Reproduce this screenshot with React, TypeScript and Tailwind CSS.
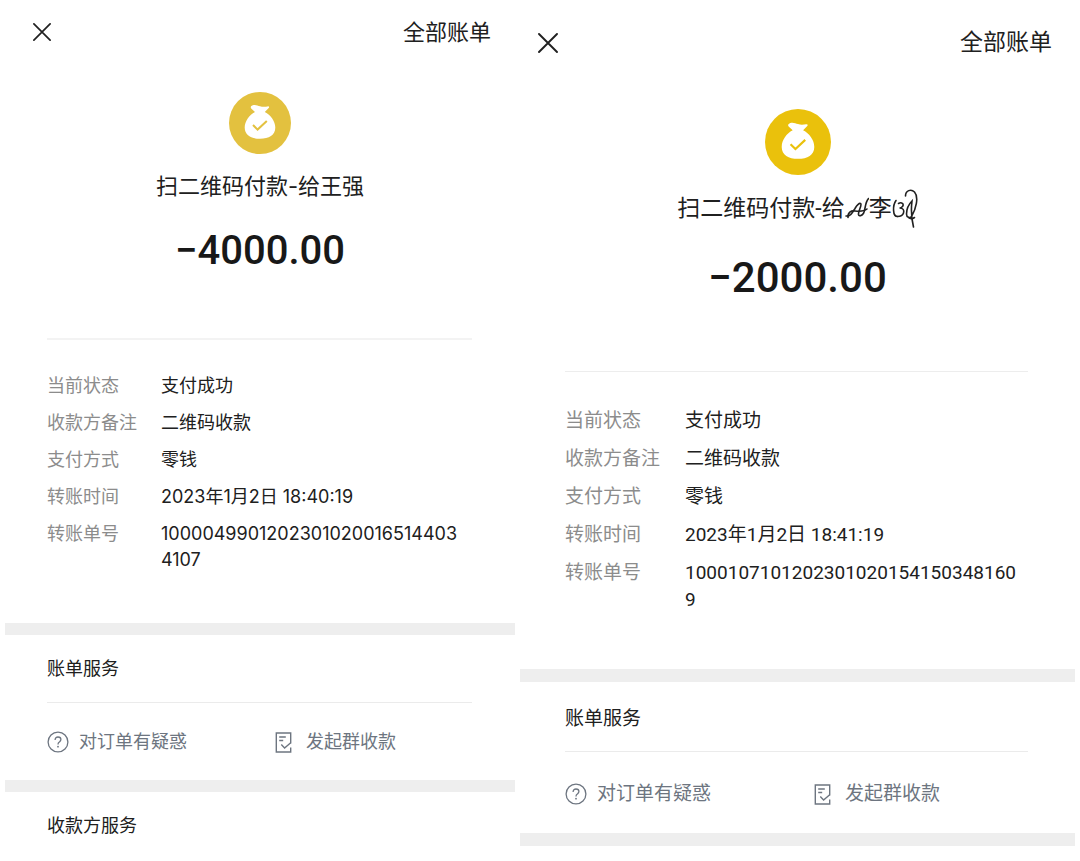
import clsx from "clsx";

interface Receipt {
  id: string;
  payee: string;
  decorated?: boolean;
  amount: string;
  rows: { label: string; value: string }[];
  services: string[];
}

/** 每张账单的尺寸方案：compact 较小，regular 较大 */
const themes = {
  compact: {
    font: "font-[Inter,'Noto_Sans_CJK_SC',sans-serif]",
    header: "h-16 pl-7 pr-6 text-[22px]",
    close: "size-[18px]",
    hero: "pt-7",
    badge: "size-[62px] text-[#e3c13f]",
    title: "mt-4 text-[22px]",
    amount: "mt-6 text-[40px] leading-[50px]",
    gutter: "ml-[42px] mr-[43px]",
    heroLine: "mt-[62px] border-t-2 border-[#f3f3f3]",
    rows: "mt-[33px] mb-[50px] grid-cols-[114px_1fr] text-[18px] leading-[26px]",
    number: "pr-1",
    band: "h-3",
    sectionTitle: "pt-5 text-[18px]",
    sectionLine: "mt-[19px]",
    actions: "pt-[25px] pb-6 text-[18px] grid-cols-[228px_1fr]",
  },
  regular: {
    font: "font-[Roboto,'Noto_Sans_CJK_SC',sans-serif]",
    header: "h-[86px] pl-[18px] pr-[23px] text-[23px]",
    close: "size-5",
    hero: "pt-[23px]",
    badge: "size-[66px] text-[#eac10c]",
    title: "mt-[18px] text-[23px]",
    amount: "mt-[27px] text-[42px] leading-[52px]",
    gutter: "ml-[45px] mr-[47px]",
    heroLine: "mt-[67px] border-t border-[#ededed]",
    rows: "mt-[35px] mb-14 grid-cols-[120px_1fr] text-[19px] leading-[27px]",
    number: "pr-2",
    band: "h-[13px]",
    sectionTitle: "pt-[23px] text-[19px]",
    sectionLine: "mt-[18px]",
    actions: "pt-7 pb-[25px] text-[19px] grid-cols-[249px_1fr]",
  },
};

type Theme = (typeof themes)["compact"];

const first: Receipt = {
  id: "first",
  payee: "王强",
  amount: "4000.00",
  rows: [
    { label: "当前状态", value: "支付成功" },
    { label: "收款方备注", value: "二维码收款" },
    { label: "支付方式", value: "零钱" },
    { label: "转账时间", value: "2023年1月2日 18:40:19" },
    { label: "转账单号", value: "10000499012023010200165144034107" },
  ],
  services: ["收款方服务"],
};

const second: Receipt = {
  id: "second",
  payee: "李",
  decorated: true,
  amount: "2000.00",
  rows: [
    { label: "当前状态", value: "支付成功" },
    { label: "收款方备注", value: "二维码收款" },
    { label: "支付方式", value: "零钱" },
    { label: "转账时间", value: "2023年1月2日 18:41:19" },
    { label: "转账单号", value: "10001071012023010201541503481609" },
  ],
  services: [],
};

function CloseIcon({ className }: { className: string }) {
  return (
    <svg viewBox="0 0 20 20" className={className} fill="none" stroke="currentColor" strokeWidth="1.9" strokeLinecap="round">
      <path d="M1 1l18 18M19 1L1 19" />
    </svg>
  );
}

function MoneyBag({ className }: { className: string }) {
  return (
    <svg viewBox="0 0 62 62" className={className} aria-hidden="true">
      <circle cx="31" cy="31" r="31" fill="currentColor" />
      <path
        fill="#fff"
        d="M23.800 13.200c2.500-.9 4.900.3 7.200 1 2.500.8 5 .6 7.600.2 1.500-.2 2 .5 1.100 1.600l-3.900 4c5.800 3 10.500 9.200 10.500 15.600 0 7.600-6.400 11.200-15.300 11.200s-15.300-3.600-15.300-11.200c0-6.400 4.600-12.600 10.300-15.600l-3.800-3.600c-1-1.100-.4-2.600 1.600-3.200z"
      />
      <path d="M24 33l4.600 4.600 9.200-8.600" fill="none" stroke="currentColor" strokeWidth="2" />
    </svg>
  );
}

function HelpIcon() {
  return (
    <svg viewBox="0 0 22 22" className="size-[22px]" fill="none" stroke="currentColor" strokeWidth="1.300">
      <circle cx="11" cy="11" r="9.900" />
      <path d="M8.100 8.900c0-1.800 1.200-2.900 2.900-2.900s2.900 1.100 2.900 2.600c0 1.200-.8 1.800-1.600 2.500-.8.600-1.300 1.100-1.300 2.300" />
      <circle cx="11" cy="15.700" r=".9" fill="currentColor" stroke="none" />
    </svg>
  );
}

function BillIcon() {
  return (
    <svg viewBox="0 0 17 21" className="h-[21px] w-[17px]" fill="none" stroke="currentColor" strokeWidth="1.400">
      <path d="M15.700 11.500V1H1.300v19h14.400v-4.500" />
      <path d="M4.200 5h6.600M4.200 8.500h4M6.300 12.600l3.300 3.400 6.100-5.300" />
    </svg>
  );
}

/** 昵称左侧的花饰 */
function LeftFlourish() {
  return (
    <svg viewBox="0 0 24 24" className="h-6 w-6" fill="none" stroke="currentColor" strokeWidth="1.600" strokeLinecap="round">
      <path d="M1 19c4.500.5 6.500-3.500 9-7.500C12 8 14.500 5.500 15.800 6.800c1.200 1.500-2.800 7.700-2.300 10.700.4 2 3.500 1.500 5.200-1.500C20.500 12 20 5 23.500 1.500" />
      <path d="M3 20.500C2.500 15.500 6 13.500 10 14s9 .5 12-2" />
    </svg>
  );
}

/** 昵称右侧的花饰 */
function RightFlourish() {
  return (
    <svg viewBox="0 0 26 40" className="h-10 w-[26px]" fill="none" stroke="currentColor" strokeWidth="1.600" strokeLinecap="round">
      <path d="M4 11.500C.5 16.500.5 27.500 5.500 27.500" />
      <path d="M6.500 14.500c3-2 6 .5 4 3-.8 1-2 1.500-3 1.500 3.500 0 5 2 4 5-.8 2.500-3 3.500-6 3.500" />
      <path d="M13.500 7C13.500 1.500 19-.5 22.500 3c4.500 5 1.500 17-3 24.500-1.500 2-5 1-5-2.500 0-5 3-10.500 5.500-13-1 8-1 16 1.500 26" />
      <path d="M17 28.800c1.500.9 4 .8 5.500-.3" />
    </svg>
  );
}

function SectionTitle({ theme, children }: { theme: Theme; children: string }) {
  return <h2 className={clsx("leading-7", theme.gutter, theme.sectionTitle)}>{children}</h2>;
}

function ReceiptPanel({ receipt, theme }: { receipt: Receipt; theme: Theme }) {
  return (
    <article className={clsx("min-w-0 text-[#202020]", theme.font)}>
      <header className={clsx("flex items-center justify-between", theme.header)}>
        <button type="button" aria-label="关闭">
          <CloseIcon className={theme.close} />
        </button>
        <button type="button">全部账单</button>
      </header>

      <div className={clsx("flex flex-col items-center", theme.hero)}>
        <MoneyBag className={theme.badge} />
        <h1 className={clsx("flex h-8 items-center whitespace-nowrap", theme.title)}>
          <span>扫二维码付款-给</span>
          {receipt.decorated && <LeftFlourish />}
          <span>{receipt.payee}</span>
          {receipt.decorated && <RightFlourish />}
        </h1>
        <p className={clsx("font-[Roboto,sans-serif] font-medium text-[#181818]", theme.amount)}>−{receipt.amount}</p>
      </div>

      <hr className={clsx(theme.gutter, theme.heroLine)} />

      <dl className={clsx("grid gap-y-[11px]", theme.gutter, theme.rows)}>
        {receipt.rows.map((row) => (
          <div key={row.label} className="col-span-2 grid grid-cols-subgrid">
            <dt className="text-[#8c8c8c]">{row.label}</dt>
            <dd className={clsx("break-all", theme.number)}>{row.value}</dd>
          </div>
        ))}
      </dl>

      <div className={clsx("bg-[#eeeeee]", theme.band)} />

      <section>
        <SectionTitle theme={theme}>账单服务</SectionTitle>
        <hr className={clsx("border-[#ebebeb]", theme.gutter, theme.sectionLine)} />
        <div className={clsx("grid leading-7 text-[#6d7580]", theme.gutter, theme.actions)}>
          <button type="button" className="flex items-center gap-2.5">
            <HelpIcon />
            对订单有疑惑
          </button>
          <button type="button" className="flex items-center gap-3.5">
            <BillIcon />
            发起群收款
          </button>
        </div>
      </section>

      <div className={clsx("bg-[#eeeeee]", theme.band)} />

      {receipt.services.map((name) => (
        <section key={name} className="pb-2">
          <SectionTitle theme={theme}>{name}</SectionTitle>
        </section>
      ))}
    </article>
  );
}

export default function App() {
  return (
    <main className="grid min-h-screen grid-cols-[510fr_555fr] gap-[5px] bg-white px-[5px]">
      <ReceiptPanel receipt={first} theme={themes.compact} />
      <ReceiptPanel receipt={second} theme={themes.regular} />
    </main>
  );
}
